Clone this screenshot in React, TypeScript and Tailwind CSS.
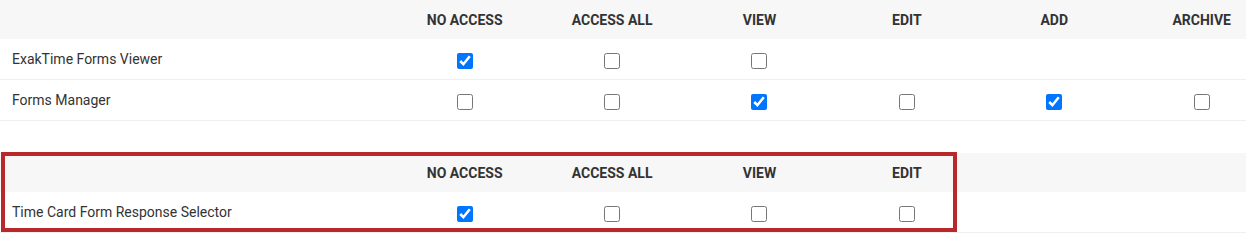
import React from "react";

const COLS = ["NO ACCESS", "ACCESS ALL", "VIEW", "EDIT", "ADD", "ARCHIVE"];

type Cell = boolean | null;

function Box({ checked }: { checked: boolean }) {
  return (
    <input
      type="checkbox"
      defaultChecked={checked}
      className="w-4 h-4 m-0 mt-[4px] cursor-pointer"
    />
  );
}

function Header({ labels }: { labels: string[] }) {
  return (
    <div className="grid grid-cols-[391px_repeat(6,147.4px)] h-[39px] items-center bg-[#f7f7f7]">
      <div />
      {labels.map((l, i) => (
        <div
          key={i}
          className="text-center text-[14px] font-bold text-[#333333] leading-none"
        >
          {l}
        </div>
      ))}
    </div>
  );
}

function Row({ name, cells }: { name: string; cells: Cell[] }) {
  return (
    <div className="grid grid-cols-[391px_repeat(6,147.4px)] h-[41px] items-center border-b border-[#efefef]">
      <div className="pl-3 text-[14px] text-[#333333]">{name}</div>
      {cells.map((c, i) => (
        <div key={i} className="flex justify-center items-center">
          {c === null ? null : <Box checked={c} />}
        </div>
      ))}
    </div>
  );
}

export default function App() {
  return (
    <div className="w-[1246px] h-[248px] overflow-hidden bg-white font-['Roboto',_'Liberation_Sans',_sans-serif]">
      <div className="w-[1276px]">
        <Header labels={COLS} />
        <Row
          name="ExakTime Forms Viewer"
          cells={[true, false, false, null, null, null]}
        />
        <Row
          name="Forms Manager"
          cells={[false, false, true, false, true, false]}
        />

        <div className="relative mt-8">
          <Header labels={["NO ACCESS", "ACCESS ALL", "VIEW", "EDIT", "", ""]} />
          <Row
            name="Time Card Form Response Selector"
            cells={[true, false, false, false, null, null]}
          />
          <div className="absolute -top-px left-px w-[956px] h-[80px] border-4 border-[#b8292b] pointer-events-none" />
        </div>
      </div>
    </div>
  );
}
